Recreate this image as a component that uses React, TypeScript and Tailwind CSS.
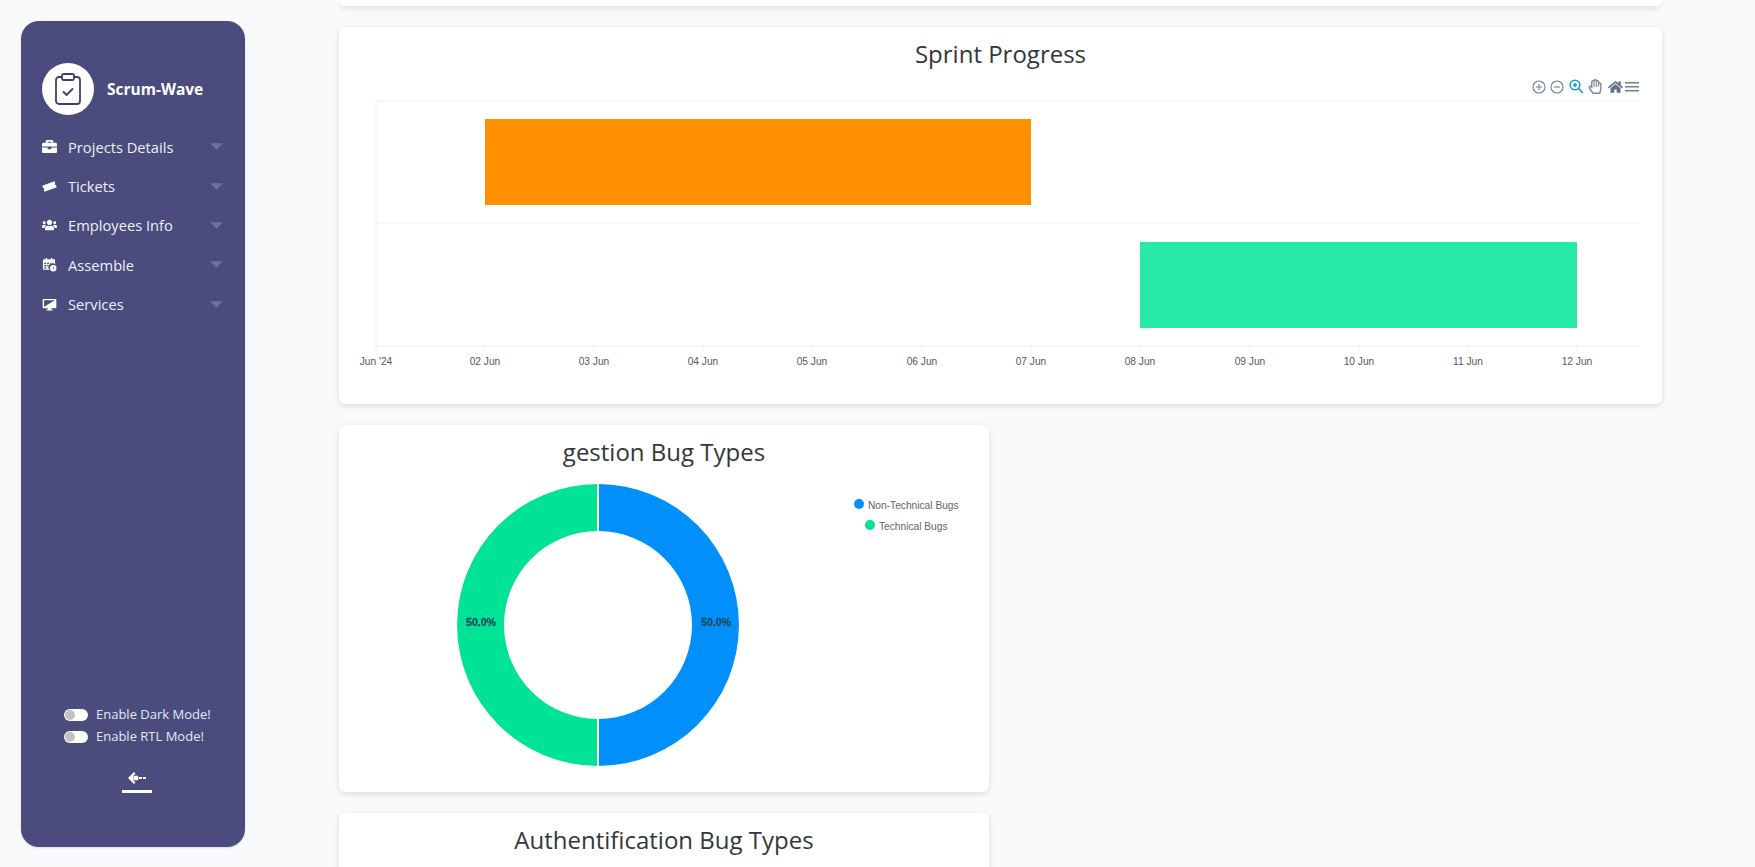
import { ClipboardCheck } from 'lucide-react';
import { FaBriefcase, FaUsers, FaHome, FaRegHandPaper } from 'react-icons/fa';
import type { ReactNode } from 'react';

const TicketIcon = () => (
  <svg viewBox="0 0 16 16" className="w-[15px] h-[15px] -rotate-[20deg]" fill="#fff">
    <path d="M1 4.500h14v2.300a1.300 1.300 0 0 0 0 2.400v2.300H1V9.200a1.300 1.300 0 0 0 0-2.400z" />
  </svg>
);

const AssembleIcon = () => (
  <svg viewBox="0 0 16 16" className="w-[15px] h-[15px]" fill="#fff">
    <path d="M2 2.500h2V1h1.500v1.500h4V1H11v1.500h2a1 1 0 0 1 1 1V8a4 4 0 0 0-6 5.500H2a1 1 0 0 1-1-1v-9a1 1 0 0 1 1-1zM2.500 6v1.500h2V6zm3 0v1.500h2V6zm3 0v1.500h2V6zm-6 2.500V10h2V8.500zm3 0V10h2V8.500zm-3 2.500v1.500h2V11z" fillRule="evenodd" />
    <circle cx="12" cy="12" r="3.400" />
    <path d="M12 10.300v1.900l1.200.8" stroke="#4a4c7d" strokeWidth="0.8" fill="none" />
  </svg>
);

const ServicesIcon = () => (
  <svg viewBox="0 0 16 16" className="w-[15px] h-[15px]" fill="#fff">
    <path d="M1.500 2h13a.8.8 0 0 1 .8.8v8.400a.8.8 0 0 1-.8.8H10v1.500h1.500v1h-7v-1H6V12H1.500a.8.8 0 0 1-.8-.8V2.800a.8.8 0 0 1 .8-.8zM13.800 3.500H2.200v7z" fillRule="evenodd" />
  </svg>
);

const menu: { label: string; icon: ReactNode }[] = [
  { label: 'Projects Details', icon: <FaBriefcase className="w-[15px] h-[15px] text-white" /> },
  { label: 'Tickets', icon: <TicketIcon /> },
  { label: 'Employees Info', icon: <FaUsers className="w-[16px] h-[16px] text-white" /> },
  { label: 'Assemble', icon: <AssembleIcon /> },
  { label: 'Services', icon: <ServicesIcon /> },
];

const days = [
  { x: 376, t: "Jun '24" },
  { x: 485, t: '02 Jun' },
  { x: 594, t: '03 Jun' },
  { x: 703, t: '04 Jun' },
  { x: 812, t: '05 Jun' },
  { x: 922, t: '06 Jun' },
  { x: 1031, t: '07 Jun' },
  { x: 1140, t: '08 Jun' },
  { x: 1250, t: '09 Jun' },
  { x: 1359, t: '10 Jun' },
  { x: 1468, t: '11 Jun' },
  { x: 1577, t: '12 Jun' },
];

const Toggle = ({ label }: { label: string }) => (
  <div className="flex items-center h-[22px]">
    <div className="w-6 h-3 rounded-full bg-white flex items-center pl-px">
      <div className="w-2.5 h-2.5 rounded-full bg-[#c2c2c2]" />
    </div>
    <span className="ml-[8px] text-[13px] text-[#e6e7f5]">{label}</span>
  </div>
);

const Sidebar = () => (
  <aside className="w-[224px] h-[826px] shrink-0 rounded-[18px] bg-[#4a4c7d] flex flex-col pt-[42px] pb-[54px] shadow-sm">
    <div className="flex items-center pl-[21px] gap-[13px]">
      <div className="w-[52px] h-[52px] rounded-full bg-white flex items-center justify-center">
        <ClipboardCheck className="w-[36px] h-[36px] text-[#3f4166]" strokeWidth={1.2} />
      </div>
      <span className="pt-[2px] text-[15.5px] font-bold text-white">Scrum-Wave</span>
    </div>
    <nav className="mt-[12px] flex flex-col">
      {menu.map((item) => (
        <div key={item.label} className="h-[39.4px] flex items-center pl-[21px] pr-[22px]">
          <span className="w-[15px] h-[15px] flex items-center justify-center shrink-0">{item.icon}</span>
          <span className="ml-[11px] text-[14.7px] text-[#eeeefa] flex-1">{item.label}</span>
          <svg viewBox="0 0 14 7" className="w-[13px] h-[7px]" fill="#6f7199">
            <path d="M0 0h14L7 7z" />
          </svg>
        </div>
      ))}
    </nav>
    <div className="mt-auto pl-[43px] flex flex-col">
      <Toggle label="Enable Dark Mode!" />
      <Toggle label="Enable RTL Mode!" />
    </div>
    <div className="mt-[23px] flex flex-col items-center pl-[7px]">
      <svg viewBox="0 0 20 14" className="w-[20px] h-[14px]" fill="#fff">
        <path d="M7 1 1 7l6 6 1.500-1.500L6.500 9.500V4.500l2-2z" />
        <circle cx="9" cy="7" r="2.500" />
        <rect x="12" y="6" width="3" height="2" />
        <rect x="16" y="6" width="3" height="2" />
      </svg>
      <div className="mt-[5px] w-[30px] h-[3px] bg-white" />
    </div>
  </aside>
);

const Toolbar = () => (
  <div className="absolute right-[23px] top-[52px] flex items-center">
    <svg viewBox="0 0 14 14" className="w-[14px] h-[14px]" fill="none" stroke="#6e8192" strokeWidth="1.100">
      <circle cx="7" cy="7" r="6" />
      <path d="M7 4v6M4 7h6" />
    </svg>
    <svg viewBox="0 0 14 14" className="ml-[4px] w-[14px] h-[14px]" fill="none" stroke="#6e8192" strokeWidth="1.100">
      <circle cx="7" cy="7" r="6" />
      <path d="M4 7h6" />
    </svg>
    <svg viewBox="0 0 15 15" className="ml-[5px] w-[15px] h-[15px]" fill="none" stroke="#2196d8" strokeWidth="1.600">
      <circle cx="6" cy="6" r="4.800" />
      <path d="m9.500 9.500 4.500 4.500M4 6h4M6 4v4" />
    </svg>
    <FaRegHandPaper className="ml-[4px] w-[14px] h-[15px] text-[#7c8a97]" />
    <FaHome className="ml-[6px] w-[15px] h-[14px] text-[#5f7386]" />
    <svg viewBox="0 0 14 12" className="ml-[2px] w-[14px] h-[12px]" fill="#6e8192">
      <rect y="1" width="14" height="1.500" />
      <rect y="5" width="14" height="1.500" />
      <rect y="9" width="14" height="1.500" />
    </svg>
  </div>
);

const SprintChart = () => (
  <svg viewBox="339 80 1323 300" className="w-full h-[300px] block">
    {[101, 223, 346].map((y) => (
      <line key={y} x1={376} x2={1639} y1={y} y2={y} stroke="#eef0f2" />
    ))}
    <line x1={376} x2={376} y1={101} y2={346} stroke="#eef0f2" />
    <rect x={485} y={119} width={546} height={86} fill="#ff9100" />
    <rect x={1140} y={242} width={437} height={86} fill="#27e9a8" />
    {days.map((d) => (
      <g key={d.t}>
        <line x1={d.x} x2={d.x} y1={346} y2={351} stroke="#eef0f2" />
        <text x={d.x} y={365} textAnchor="middle" fontSize={10.2} fill="#555" fontFamily="Liberation Sans, sans-serif">
          {d.t}
        </text>
      </g>
    ))}
  </svg>
);

const BugDonut = () => (
  <svg viewBox="339 470 650 322" className="w-full h-[322px] block">
    <path d="M598 484a141 141 0 0 1 0 282v-47a94 94 0 0 0 0-188z" fill="#008ffb" />
    <path d="M598 484a141 141 0 0 0 0 282v-47a94 94 0 0 1 0-188z" fill="#00e396" />
    <line x1={598} x2={598} y1={482} y2={532} stroke="#fff" strokeWidth={2} />
    <line x1={598} x2={598} y1={718} y2={768} stroke="#fff" strokeWidth={2} />
    <g
      className="blur-[0.6px]"
      fontSize={10.5}
      fontWeight={700}
      fill="#1f4a55"
      stroke="#1f4a55"
      strokeWidth={0.3}
      textAnchor="middle"
      fontFamily="Liberation Sans, sans-serif"
    >
      <text x={481} y={626}>50.0%</text>
      <text x={716} y={626}>50.0%</text>
    </g>
    <g fontSize={10.2} fill="#5f6368" fontFamily="Liberation Sans, sans-serif">
      <circle cx={859} cy={504} r={5} fill="#008ffb" />
      <text x={868} y={509}>Non-Technical Bugs</text>
      <circle cx={870} cy={525} r={5} fill="#00e396" />
      <text x={879} y={530}>Technical Bugs</text>
    </g>
  </svg>
);

const cardClass = 'shrink-0 bg-white rounded-md shadow-[0_2px_6px_rgba(0,0,0,0.12)]';

export default function App() {
  return (
    <div
      className="h-[867px] overflow-hidden bg-[#f9fafc] flex pl-[21px] pt-[21px] text-[#33373a]"
      style={{ fontFamily: '"Open Sans", sans-serif' }}
    >
      <Sidebar />
      <main className="ml-[94px] w-[1323px] -mt-[21px] flex flex-col gap-[21px]">
        <div className={`${cardClass} h-[6px] rounded-t-none`} />
        <section className={`${cardClass} relative h-[377px]`}>
          <h2 className="h-[53px] pt-[9px] text-center text-[24px] leading-[36px]">Sprint Progress</h2>
          <Toolbar />
          <SprintChart />
        </section>
        <section className={`${cardClass} w-[650px] h-[367px]`}>
          <h2 className="h-[45px] pt-[9px] text-center text-[24px] leading-[36px]">gestion Bug Types</h2>
          <BugDonut />
        </section>
        <section className={`${cardClass} w-[650px] h-[200px]`}>
          <h2 className="pt-[9px] text-center text-[24px] leading-[36px]">Authentification Bug Types</h2>
        </section>
      </main>
    </div>
  );
}
